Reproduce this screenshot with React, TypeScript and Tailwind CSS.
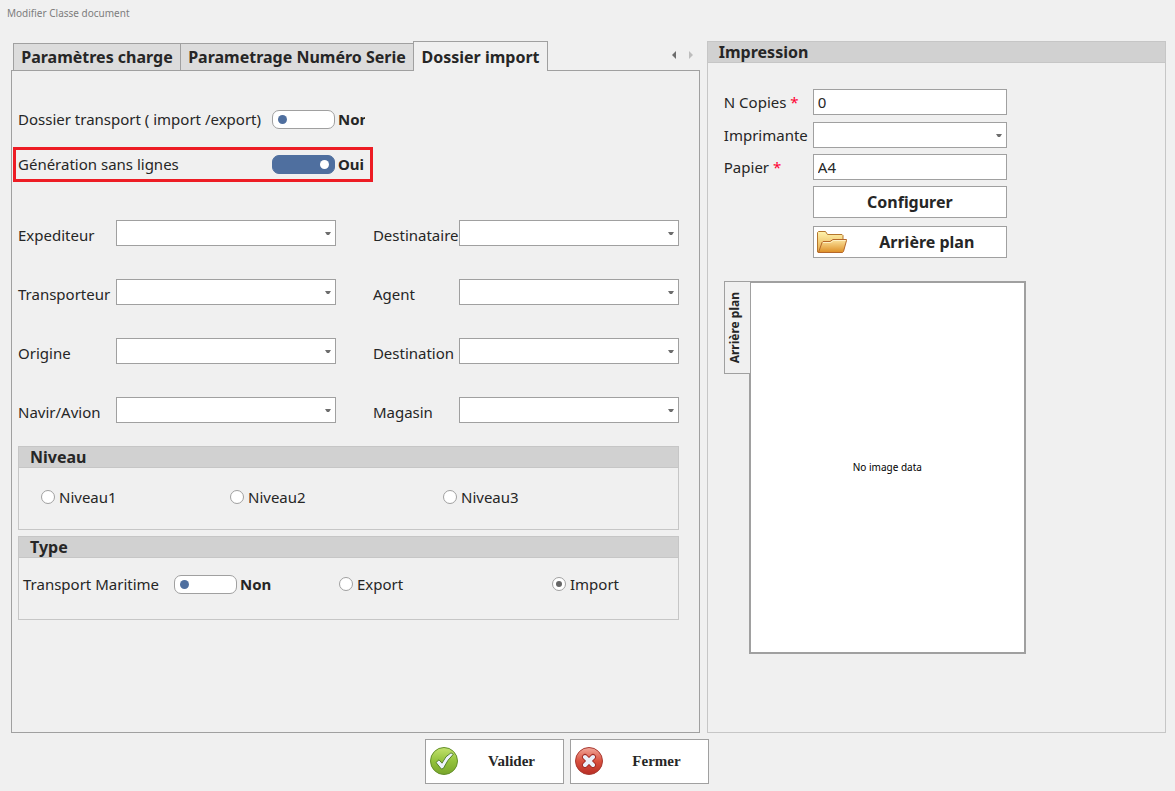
import React, { useState } from 'react';

interface SelectFieldProps {
  id: string;
  options?: string[];
}

const SelectField: React.FC<SelectFieldProps> = ({ id, options = [] }) => (
  <div className="relative w-full">
    <select
      id={id}
      className="block w-full h-[26px] appearance-none bg-white border border-[#a0a0a0] px-1 outline-none focus:border-[#4f6f9f]"
    >
      <option value="" />
      {options.map((option) => (
        <option key={option}>{option}</option>
      ))}
    </select>
    <svg
      viewBox="0 0 6 3"
      className="absolute right-[5px] top-[12px] w-[6px] h-[3px] pointer-events-none"
      aria-hidden="true"
    >
      <path d="M0 0h6L4 3H2z" fill="#6d6d6d" />
    </svg>
  </div>
);

interface SwitchProps {
  id: string;
  defaultOn?: boolean;
  stateClass?: string;
}

const Switch: React.FC<SwitchProps> = ({ id, defaultOn = false, stateClass = '' }) => {
  const [on, setOn] = useState(defaultOn);

  return (
    <div className="flex items-center gap-[3px]">
      <input
        id={id}
        type="checkbox"
        role="switch"
        checked={on}
        onChange={() => setOn(!on)}
        className="appearance-none shrink-0 w-[63px] h-[19px] flex items-center rounded-[7px] border border-[#a0a0a0] bg-white px-[5px] checked:justify-end checked:border-[#4f6f9f] checked:bg-[#4f6f9f] before:block before:size-[9px] before:rounded-full before:bg-[#4f6f9f] checked:before:bg-white"
      />
      <span className={`font-bold overflow-hidden whitespace-nowrap ${stateClass}`}>
        {on ? 'Oui' : 'Non'}
      </span>
    </div>
  );
};

interface RadioProps {
  name: string;
  label: string;
  defaultChecked?: boolean;
}

const Radio: React.FC<RadioProps> = ({ name, label, defaultChecked }) => (
  <label className="flex items-center gap-1 whitespace-nowrap">
    <input
      type="radio"
      name={name}
      defaultChecked={defaultChecked}
      className="appearance-none shrink-0 size-[14px] mb-[2px] flex items-center justify-center rounded-full border border-[#a0a0a0] bg-white before:block before:size-[6px] before:rounded-full checked:before:bg-[#666666]"
    />
    {label}
  </label>
);

interface GroupProps {
  title: string;
  className?: string;
  children: React.ReactNode;
}

const Group: React.FC<GroupProps> = ({ title, className = '', children }) => (
  <section className={`border border-[#c6c6c6] ${className}`}>
    <h2 className="h-[21px] leading-[21px] px-[11px] bg-[#d1d1d1] border-b border-[#c6c6c6] text-base font-bold">
      {title}
    </h2>
    {children}
  </section>
);

const FolderIcon = () => (
  <svg viewBox="0 0 32 24" className="w-8 h-6 shrink-0" aria-hidden="true">
    <defs>
      <linearGradient id="folderBack" x1="0" y1="0" x2="0" y2="1">
        <stop offset="0" stopColor="#fff3ad" />
        <stop offset="1" stopColor="#e6a743" />
      </linearGradient>
      <linearGradient id="folderFront" x1="0" y1="0" x2="0" y2="1">
        <stop offset="0" stopColor="#fce5a0" />
        <stop offset="1" stopColor="#dd8e25" />
      </linearGradient>
    </defs>
    <path
      d="M1.5 22V2.5L2.500 1.500H9.500L11.500 4.500H26L27 5.500V11L22 22.500H2z"
      fill="url(#folderBack)"
      stroke="#b5762c"
    />
    <path
      d="M2.500 22.500L6 12.500L7 11.500H14L17 9.500H30.500V10.500L27.500 21.500L26.500 22.500z"
      fill="url(#folderFront)"
      stroke="#b5672a"
    />
    <path d="M7 12.500H14.500L17.500 10.500H29.500" fill="none" stroke="#fff0c4" />
  </svg>
);

const ValidIcon = () => (
  <svg viewBox="0 0 30 30" className="size-[30px] shrink-0" aria-hidden="true">
    <defs>
      <linearGradient id="validFill" x1="0" y1="0" x2="0" y2="1">
        <stop offset="0" stopColor="#c3e26e" />
        <stop offset="0.5" stopColor="#93c23c" />
        <stop offset="1" stopColor="#78a52a" />
      </linearGradient>
    </defs>
    <circle cx="15" cy="15" r="13.500" fill="url(#validFill)" stroke="#648f2b" />
    <path
      d="M7 16.500L10 13.800L13 17.200Q16.500 9.500 22 6.800L24.300 8.300Q18.500 13.500 14.300 22.500L12.300 23z"
      fill="#edf3fb"
      stroke="#55802b"
      strokeLinejoin="round"
    />
  </svg>
);

const CloseIcon = () => (
  <svg viewBox="0 0 30 30" className="size-[30px] shrink-0" aria-hidden="true">
    <defs>
      <linearGradient id="closeFill" x1="0" y1="0" x2="0" y2="1">
        <stop offset="0" stopColor="#f2a99c" />
        <stop offset="0.5" stopColor="#d9513f" />
        <stop offset="1" stopColor="#b82c24" />
      </linearGradient>
    </defs>
    <circle cx="15" cy="15" r="13.500" fill="url(#closeFill)" stroke="#a83a32" />
    <path d="M11 11L19 19M19 11L11 19" stroke="#a02a25" strokeWidth="6" strokeLinecap="round" />
    <path d="M11 11L19 19M19 11L11 19" stroke="#eaf0fa" strokeWidth="4" strokeLinecap="round" />
  </svg>
);

const PARTIES = [
  ['Expediteur', 'Destinataire'],
  ['Transporteur', 'Agent'],
  ['Origine', 'Destination'],
  ['Navir/Avion', 'Magasin'],
];

const ImportPanel = () => (
  <div
    role="tabpanel"
    className="flex-1 border border-[#a0a0a0] pl-px pr-5 pt-[35px] pb-4"
  >
    <div className="flex items-center h-[27px] pl-[5px]">
      <label htmlFor="dossier" className="w-[254px] whitespace-nowrap">
        Dossier transport ( import /export)
      </label>
      <Switch id="dossier" stateClass="w-[27px]" />
    </div>

    <div className="flex items-center w-[360px] h-[35px] mt-[14px] pl-[2px] border-3 border-[#ed1c24]">
      <label htmlFor="generation" className="w-[254px] whitespace-nowrap">
        Génération sans lignes
      </label>
      <Switch id="generation" defaultOn />
    </div>

    <div className="grid grid-cols-[98px_1fr_123px_1fr] gap-y-[33px] mt-[38px] pl-[5px]">
      {PARTIES.map(([left, right]) => (
        <React.Fragment key={left}>
          <label htmlFor={left} className="pt-1 leading-[22px]">
            {left}
          </label>
          <SelectField id={left} />
          <label htmlFor={right} className="pt-1 pl-[37px] leading-[22px]">
            {right}
          </label>
          <SelectField id={right} />
        </React.Fragment>
      ))}
    </div>

    <Group title="Niveau" className="ml-[5px] mt-[23px]">
      <div className="grid grid-cols-[189px_213px_1fr] items-center h-[61px] pl-[22px] pb-[2px]">
        <Radio name="niveau" label="Niveau1" />
        <Radio name="niveau" label="Niveau2" />
        <Radio name="niveau" label="Niveau3" />
      </div>
    </Group>

    <Group title="Type" className="ml-[5px] mt-[6px]">
      <div className="grid grid-cols-[151px_165px_213px_1fr] items-center h-[61px] pl-1 pb-[8px]">
        <label htmlFor="maritime" className="whitespace-nowrap">
          Transport Maritime
        </label>
        <Switch id="maritime" />
        <Radio name="sens" label="Export" />
        <Radio name="sens" label="Import" defaultChecked />
      </div>
    </Group>
  </div>
);

const Tabs = () => (
  <div className="flex items-end h-[30px] -mb-px px-[2px] text-base font-bold relative" role="tablist">
    <button role="tab" aria-selected="false" className="h-7 w-[168px] whitespace-nowrap bg-[#dcdcdc] border border-[#a0a0a0]">
      Paramètres charge
    </button>
    <button role="tab" aria-selected="false" className="h-7 w-[234px] -ml-px whitespace-nowrap bg-[#dcdcdc] border border-[#a0a0a0]">
      Parametrage Numéro Serie
    </button>
    <button role="tab" aria-selected="true" className="h-[30px] w-[135px] -ml-px whitespace-nowrap bg-[#f0f0f0] border border-b-0 border-[#a0a0a0]">
      Dossier import
    </button>
    <div className="flex gap-[13px] ml-auto mr-[5px] mb-[12px]">
      <button aria-label="Onglet précédent">
        <svg viewBox="0 0 4 8" className="w-1 h-2">
          <path d="M4 0v8L0 4z" fill="#6d6d6d" />
        </svg>
      </button>
      <button aria-label="Onglet suivant">
        <svg viewBox="0 0 4 8" className="w-1 h-2">
          <path d="M0 0v8l4-4z" fill="#bdbdbd" />
        </svg>
      </button>
    </div>
  </div>
);

const Required = () => <span className="text-[#ff0033]">*</span>;

const PrintPanel = () => (
  <Group title="Impression" className="min-w-0">
    <div className="grid grid-cols-[89px_194px] gap-y-[6px] pl-4 pt-[26px]">
      <label htmlFor="copies" className="leading-[27px]">
        N Copies <Required />
      </label>
      <input id="copies" defaultValue="0" className="h-[26px] px-1 bg-white border border-[#a0a0a0]" />
      <label htmlFor="imprimante" className="leading-[26px]">
        Imprimante
      </label>
      <SelectField id="imprimante" />
      <label htmlFor="papier" className="leading-[26px]">
        Papier <Required />
      </label>
      <input id="papier" defaultValue="A4" className="h-[26px] px-1 bg-white border border-[#a0a0a0]" />
      <button className="col-start-2 h-8 bg-white border border-[#a0a0a0] text-base font-bold">
        Configurer
      </button>
      <button className="col-start-2 flex items-center h-8 mt-[2px] pl-[2px] bg-white border border-[#a0a0a0] text-base font-bold">
        <FolderIcon />
        <span className="flex-1">Arrière plan</span>
      </button>
    </div>

    <div className="flex items-start pl-4 mt-[23px]">
      <button className="relative flex items-center justify-center w-[26px] h-[93px] pr-1 -mr-px bg-[#f0f0f0] border border-r-0 border-[#a0a0a0] text-xs font-bold">
        <span className="[writing-mode:vertical-rl] rotate-180 whitespace-nowrap">Arrière plan</span>
      </button>
      <div className="flex items-center justify-center w-[277px] h-[373px] bg-white border-2 border-[#a0a0a0] text-[10px] text-black">
        No image data
      </div>
    </div>
  </Group>
);

export default function App() {
  return (
    <div className="flex flex-col min-h-screen pl-[11px] pr-[9px] pb-[7px] bg-[#f0f0f0] text-[#262626] text-[15px] font-['Noto_Sans','DejaVu_Sans_Condensed',sans-serif]">
      <h1 className="h-[41px] pt-1 -ml-1 text-[10px] leading-[18px] text-[#7d7d7d]">
        Modifier Classe document
      </h1>

      <main className="grid flex-1 grid-cols-[3fr_2fr] gap-[7px]">
        <div className="flex flex-col min-w-0">
          <Tabs />
          <ImportPanel />
        </div>
        <PrintPanel />
      </main>

      <footer className="flex justify-center gap-[6px] mt-[6px] pr-[43px] font-['Liberation_Serif',serif] font-bold">
        <button className="flex items-center w-[139px] h-[45px] px-[3px] pb-px bg-white border border-[#a0a0a0]">
          <ValidIcon />
          <span className="flex-1 pl-1">Valider</span>
        </button>
        <button className="flex items-center w-[139px] h-[45px] px-[3px] pb-px bg-white border border-[#a0a0a0]">
          <CloseIcon />
          <span className="flex-1 pl-1">Fermer</span>
        </button>
      </footer>
    </div>
  );
}
